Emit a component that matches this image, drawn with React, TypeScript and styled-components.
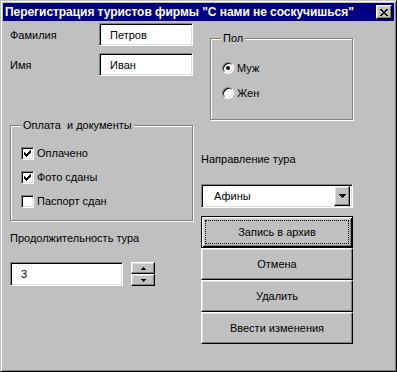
import React, { useState } from "react";
import styled, { createGlobalStyle, css } from "styled-components";

const GlobalStyle = createGlobalStyle`
  html, body {
    margin: 0;
    padding: 0;
    background: #c0c0c0;
  }
  * {
    box-sizing: border-box;
  }
`;

const sunken = css`
  border: 1px solid;
  border-color: #808080 #fff #fff #808080;
  box-shadow: inset 1px 1px #000, inset -1px -1px #dfdfdf;
`;

const raised = css`
  border: 1px solid;
  border-color: #fff #000 #000 #fff;
  box-shadow: inset -1px -1px #808080, inset 1px 1px #dfdfdf;
`;

const Window = styled.div`
  width: 397px;
  height: 372px;
  padding: 1px;
  background: #c0c0c0;
  border: 1px solid;
  border-color: #c0c0c0 #000 #000 #c0c0c0;
  box-shadow: inset 1px 1px #fff, inset -1px -1px #808080;
  display: flex;
  flex-direction: column;
  font-family: "Liberation Sans", Arial, sans-serif;
  font-size: 11px;
  color: #000;
`;

const TitleBar = styled.div`
  margin: 1px 1px 0 1px;
  height: 18px;
  background: #000080;
  display: flex;
  align-items: center;
  justify-content: space-between;
  padding: 0 2px 0 2px;
`;

const Title = styled.span`
  color: #fff;
  font-weight: bold;
  font-size: 12px;
  letter-spacing: -0.05px;
  white-space: nowrap;
`;

const CloseButton = styled.button`
  ${raised};
  width: 16px;
  height: 14px;
  padding: 0;
  background: #c0c0c0;
  display: flex;
  align-items: center;
  justify-content: center;
`;

const Client = styled.div`
  display: flex;
  padding: 2px 0 0 7px;
`;

const LeftCol = styled.div`
  width: 184px;
  display: flex;
  flex-direction: column;
`;

const RightCol = styled.div`
  width: 152px;
  margin-left: 8px;
  display: flex;
  flex-direction: column;
`;

const FieldRow = styled.div<{ $top?: number }>`
  display: flex;
  align-items: center;
  height: 23px;
  margin-top: ${(p) => p.$top ?? 0}px;
`;

const Label = styled.span<{ $width?: number }>`
  width: ${(p) => (p.$width ? `${p.$width}px` : "auto")};
  padding-left: 1px;
  line-height: 14px;
  white-space: pre;
`;

const Caption = styled.div<{ $top: number; $left?: number }>`
  margin-top: ${(p) => p.$top}px;
  margin-left: ${(p) => p.$left ?? 0}px;
  line-height: 14px;
  white-space: nowrap;
`;

const TextBox = styled.div<{ $width: number; $height?: number }>`
  ${sunken};
  width: ${(p) => p.$width}px;
  height: ${(p) => p.$height ?? 23}px;
  background: #fff;
  display: flex;
  align-items: center;
  padding-left: 10px;
`;

const GroupBox = styled.div<{ $top: number; $left: number; $width: number; $height: number }>`
  position: relative;
  margin-top: ${(p) => p.$top}px;
  margin-left: ${(p) => p.$left}px;
  width: ${(p) => p.$width}px;
  height: ${(p) => p.$height}px;
  border: 1px solid #808080;
  box-shadow: inset 1px 1px #fff, 1px 1px #fff;
  display: flex;
  flex-direction: column;
`;

const Legend = styled.span`
  position: absolute;
  top: -8px;
  left: 10px;
  padding: 0 2px;
  background: #c0c0c0;
  line-height: 14px;
  white-space: pre;
`;

const OptionList = styled.div<{ $top: number; $left: number; $gap: number }>`
  display: flex;
  flex-direction: column;
  gap: ${(p) => p.$gap}px;
  padding-top: ${(p) => p.$top}px;
  padding-left: ${(p) => p.$left}px;
`;

const Option = styled.label`
  display: flex;
  align-items: center;
  height: 14px;
  gap: 3px;
  line-height: 14px;
`;

const CheckBox = styled.span`
  ${sunken};
  width: 13px;
  height: 13px;
  background: #fff;
  display: flex;
  align-items: center;
  justify-content: center;
`;

const Radio = styled.span<{ $checked: boolean }>`
  width: 12px;
  height: 12px;
  border-radius: 50%;
  background: #fff;
  border: 1px solid;
  border-color: #808080 #fff #fff #808080;
  box-shadow: inset 1px 1px #000, inset -1px -1px #dfdfdf;
  display: flex;
  align-items: center;
  justify-content: center;
  &::after {
    content: "";
    width: 4px;
    height: 4px;
    border-radius: 50%;
    background: #000;
    display: ${(p) => (p.$checked ? "block" : "none")};
  }
`;

const Combo = styled.div`
  ${sunken};
  margin-top: 18px;
  width: 152px;
  height: 24px;
  background: #fff;
  display: flex;
  align-items: center;
  justify-content: space-between;
  padding: 2px;
`;

const ComboText = styled.span`
  padding-left: 10px;
`;

const ArrowButton = styled.span`
  ${raised};
  width: 16px;
  height: 20px;
  background: #c0c0c0;
  display: flex;
  align-items: center;
  justify-content: center;
`;

const ButtonStack = styled.div`
  margin-top: 8px;
  display: flex;
  flex-direction: column;
`;

const PushButton = styled.button<{ $default?: boolean }>`
  ${raised};
  width: 152px;
  height: 32px;
  padding: 0;
  background: #c0c0c0;
  font-family: "Liberation Sans", Arial, sans-serif;
  font-size: 11px;
  color: #000;
  ${(p) =>
    p.$default &&
    css`
      border: 1px solid #000;
      box-shadow: inset 1px 1px #fff, inset -1px -1px #000, inset 2px 2px #dfdfdf,
        inset -2px -2px #808080;
      outline: 1px dotted #000;
      outline-offset: -5px;
    `}
`;

const SpinRow = styled.div`
  margin-top: 17px;
  margin-left: 1px;
  display: flex;
  gap: 8px;
`;

const Spin = styled.div`
  display: flex;
  flex-direction: column;
`;

const SpinButton = styled.button`
  ${raised};
  width: 24px;
  height: 12px;
  padding: 0;
  background: #c0c0c0;
  display: flex;
  align-items: center;
  justify-content: center;
`;

const CloseGlyph = () => (
  <svg width="8" height="7" viewBox="0 0 8 7" shapeRendering="crispEdges">
    <path
      d="M0 0h2v1h-2zM6 0h2v1h-2zM1 1h2v1h-2zM5 1h2v1h-2zM2 2h4v1h-4zM3 3h2v1h-2zM2 4h4v1h-4zM1 5h2v1h-2zM5 5h2v1h-2zM0 6h2v1h-2zM6 6h2v1h-2z"
      fill="#000"
    />
  </svg>
);

const CheckGlyph = () => (
  <svg width="7" height="7" viewBox="0 0 7 7" shapeRendering="crispEdges">
    <path
      d="M6 0h1v1h-1zM5 1h2v1h-2zM0 2h1v1h-1zM4 2h3v1h-3zM0 3h2v1h-2zM3 3h3v1h-3zM0 4h5v1h-5zM1 5h3v1h-3zM2 6h1v1h-1z"
      fill="#000"
    />
  </svg>
);

const Triangle = ({ up, size }: { up?: boolean; size: number }) => {
  const h = Math.ceil(size / 2);
  return (
    <svg width={size} height={h} viewBox={`0 0 ${size} ${h}`} shapeRendering="crispEdges">
      <polygon
        points={up ? `0,${h} ${size},${h} ${size / 2},0` : `0,0 ${size},0 ${size / 2},${h}`}
        fill="#000"
      />
    </svg>
  );
};

const App: React.FC = () => {
  const [duration, setDuration] = useState(3);

  const payments = [
    { name: "Оплачено", checked: true },
    { name: "Фото сданы", checked: true },
    { name: "Паспорт сдан", checked: false },
  ];

  const buttons = ["Запись в архив", "Отмена", "Удалить", "Ввести изменения"];

  return (
    <>
      <GlobalStyle />
      <Window>
        <TitleBar>
          <Title>Перегистрация туристов фирмы "С нами не соскучишься"</Title>
          <CloseButton aria-label="Закрыть">
            <CloseGlyph />
          </CloseButton>
        </TitleBar>

        <Client>
          <LeftCol>
            <FieldRow>
              <Label $width={90}>Фамилия</Label>
              <TextBox $width={94}>Петров</TextBox>
            </FieldRow>
            <FieldRow $top={7}>
              <Label $width={90}>Имя</Label>
              <TextBox $width={94}>Иван</TextBox>
            </FieldRow>

            <GroupBox $top={49} $left={1} $width={183} $height={96}>
              <Legend>Оплата  и документы</Legend>
              <OptionList $top={20} $left={10} $gap={10}>
                {payments.map((item) => (
                  <Option key={item.name}>
                    <CheckBox>{item.checked && <CheckGlyph />}</CheckBox>
                    {item.name}
                  </Option>
                ))}
              </OptionList>
            </GroupBox>

            <Caption $top={10} $left={1}>
              Продолжительность тура
            </Caption>
            <SpinRow>
              <TextBox $width={113} $height={24}>
                {duration}
              </TextBox>
              <Spin>
                <SpinButton onClick={() => setDuration(duration + 1)}>
                  <Triangle up size={5} />
                </SpinButton>
                <SpinButton onClick={() => setDuration(Math.max(1, duration - 1))}>
                  <Triangle size={5} />
                </SpinButton>
              </Spin>
            </SpinRow>
          </LeftCol>

          <RightCol>
            <GroupBox $top={15} $left={9} $width={143} $height={82}>
              <Legend>Пол</Legend>
              <OptionList $top={22} $left={11} $gap={11}>
                <Option>
                  <Radio $checked />
                  Муж
                </Option>
                <Option>
                  <Radio $checked={false} />
                  Жен
                </Option>
              </OptionList>
            </GroupBox>

            <Caption $top={32}>Направление тура</Caption>
            <Combo>
              <ComboText>Афины</ComboText>
              <ArrowButton>
                <Triangle size={7} />
              </ArrowButton>
            </Combo>

            <ButtonStack>
              {buttons.map((label, i) => (
                <PushButton key={label} $default={i === 0}>
                  {label}
                </PushButton>
              ))}
            </ButtonStack>
          </RightCol>
        </Client>
      </Window>
    </>
  );
};

export default App;
